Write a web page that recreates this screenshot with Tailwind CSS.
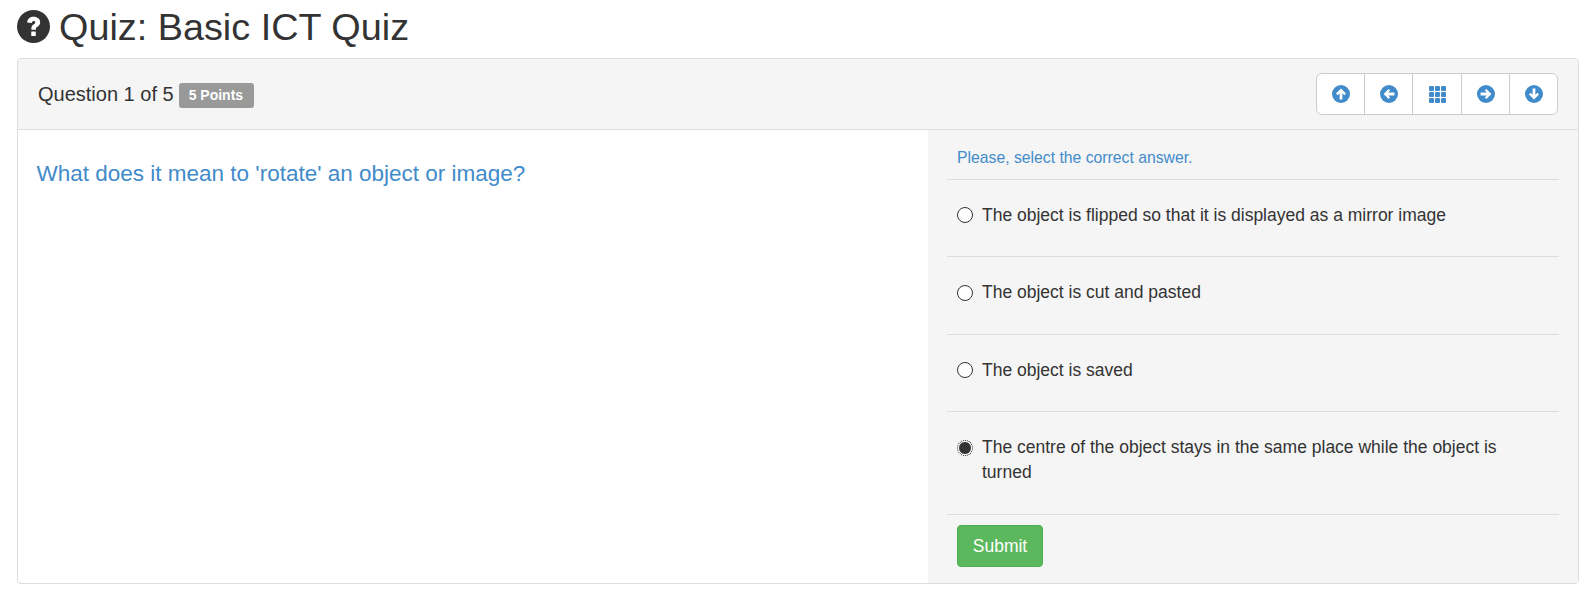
<!DOCTYPE html>
<html>
<head>
<meta charset="utf-8">
<script src="https://cdn.jsdelivr.net/npm/@tailwindcss/browser@4"></script>
</head>
<body class="bg-white font-['Liberation_Sans',Arial,sans-serif] text-[#333]">
<div class="pl-[17px] pr-[14px]">
  <h1 class="flex items-center h-[58px] pb-[5px] text-[37.8px] leading-[42px] text-[#333]">
    <svg class="w-[33px] h-[33px] mr-[9px] mb-[1px]" viewBox="0 0 32 32"><circle cx="16" cy="16" r="16" fill="#333"/><path d="M9.800 12.200c.3-3.700 3-5.600 6.400-5.600 3.500 0 6.300 2.200 6.300 5.300 0 2.300-1.300 3.400-2.700 4.400-1.100.8-1.500 1.200-1.500 2.300v.6h-4.400v-1c0-2.300.9-3.400 2.400-4.400 1-.7 1.400-1.100 1.400-1.800 0-.8-.7-1.300-1.500-1.300-1 0-1.600.7-1.800 1.900z" fill="#fff"/><rect x="13.800" y="20.800" width="4.400" height="4.400" rx=".5" fill="#fff"/></svg>
    <span>Quiz: Basic ICT Quiz</span>
  </h1>
  <div class="border border-[#ddd] rounded-[4px] overflow-hidden h-[526px] flex flex-col">
    <div class="h-[71px] shrink-0 bg-[#f5f5f5] border-b border-[#ddd] flex items-center justify-between pl-5 pr-[20px]">
      <div class="flex items-center text-[20px]">
        <span>Question 1 of 5</span>
        <span class="ml-[5px] mt-[3px] bg-[#999] text-white font-bold text-[14px] leading-none rounded-[3px] pl-[10px] pr-[11px] pt-[5px] pb-[6px]">5 Points</span>
      </div>
      <div class="flex h-[42px] bg-white border border-[#ccc] rounded-[6px] overflow-hidden">
        <div class="w-[48px] flex items-center justify-center border-r border-[#ccc]">
          <svg class="w-[18px] h-[18px]" viewBox="0 0 18 18"><circle cx="9" cy="9" r="9" fill="#428bca"/><path d="M9 3.600l5 5-1.600 1.600-2-2V14.400H7.600V8.200l-2 2L4 8.600z" fill="#fff"/></svg>
        </div>
        <div class="w-[48px] flex items-center justify-center border-r border-[#ccc]">
          <svg class="w-[18px] h-[18px]" viewBox="0 0 18 18"><circle cx="9" cy="9" r="9" fill="#428bca"/><path d="M3.600 9l5-5 1.600 1.600-2 2H14.400v2.800H8.200l2 2L8.600 14z" fill="#fff"/></svg>
        </div>
        <div class="w-[49px] flex items-center justify-center border-r border-[#ccc]">
          <svg class="w-[17px] h-[17px]" viewBox="0 0 17 17" fill="#428bca"><rect x="0" y="0" width="5" height="5" rx="1"/><rect x="6" y="0" width="5" height="5" rx="1"/><rect x="12" y="0" width="5" height="5" rx="1"/><rect x="0" y="6" width="5" height="5" rx="1"/><rect x="6" y="6" width="5" height="5" rx="1"/><rect x="12" y="6" width="5" height="5" rx="1"/><rect x="0" y="12" width="5" height="5" rx="1"/><rect x="6" y="12" width="5" height="5" rx="1"/><rect x="12" y="12" width="5" height="5" rx="1"/></svg>
        </div>
        <div class="w-[48px] flex items-center justify-center border-r border-[#ccc]">
          <svg class="w-[18px] h-[18px]" viewBox="0 0 18 18"><circle cx="9" cy="9" r="9" fill="#428bca"/><path d="M14.400 9l-5 5-1.600-1.600 2-2H3.600V7.600h6.200l-2-2L9.400 4z" fill="#fff"/></svg>
        </div>
        <div class="w-[47px] flex items-center justify-center">
          <svg class="w-[18px] h-[18px]" viewBox="0 0 18 18"><circle cx="9" cy="9" r="9" fill="#428bca"/><path d="M9 14.400l-5-5 1.600-1.600 2 2V3.600h2.800v6.200l2-2L14 9.400z" fill="#fff"/></svg>
        </div>
      </div>
    </div>
    <div class="flex flex-1 min-h-0">
      <div class="w-[910px] shrink-0 pl-[18.5px] pt-[30px] text-[22.5px] leading-[27px] text-[#428bca]">What does it mean to 'rotate' an object or image?</div>
      <div class="flex-1 bg-[#f5f5f5] px-[19px]">
        <div class="h-[50px] border-b border-[#ddd] px-[10px] pt-[18px] text-[15.75px] leading-[20px] text-[#428bca]">Please, select the correct answer.</div>
        <label class="flex items-start h-[77px] border-b border-[#ddd] px-[10px] pt-[22px] text-[17.5px] leading-[26px]"><span class="w-[16px] h-[16px] mt-[5px] rounded-full bg-white border border-[#333] mr-[9px] shrink-0"></span><span>The object is flipped so that it is displayed as a mirror image</span></label>
        <label class="flex items-start h-[78px] border-b border-[#ddd] px-[10px] pt-[22px] text-[17.5px] leading-[26px]"><span class="w-[16px] h-[16px] mt-[6px] rounded-full bg-white border border-[#333] mr-[9px] shrink-0"></span><span>The object is cut and pasted</span></label>
        <label class="flex items-start h-[77px] border-b border-[#ddd] px-[10px] pt-[22px] text-[17.5px] leading-[26px]"><span class="w-[16px] h-[16px] mt-[5px] rounded-full bg-white border border-[#333] mr-[9px] shrink-0"></span><span>The object is saved</span></label>
        <label class="flex items-start h-[103px] border-b border-[#ddd] px-[10px] pt-[23px] text-[17.5px] leading-[25px]"><span class="w-[14px] h-[14px] ml-[1px] mt-[6px] rounded-full bg-[#333] border-[1.5px] border-white outline-[1.5px] outline-dotted outline-[#222] mr-[10px] shrink-0"></span><span>The centre of the object stays in the same place while the object is turned</span></label>
        <div class="px-[10px] pt-[10px]"><button class="h-[42px] w-[86px] bg-[#5cb85c] border border-[#4cae4c] rounded-[4px] text-white text-[17.5px]">Submit</button></div>
      </div>
    </div>
  </div>
</div>
</body>
</html>
